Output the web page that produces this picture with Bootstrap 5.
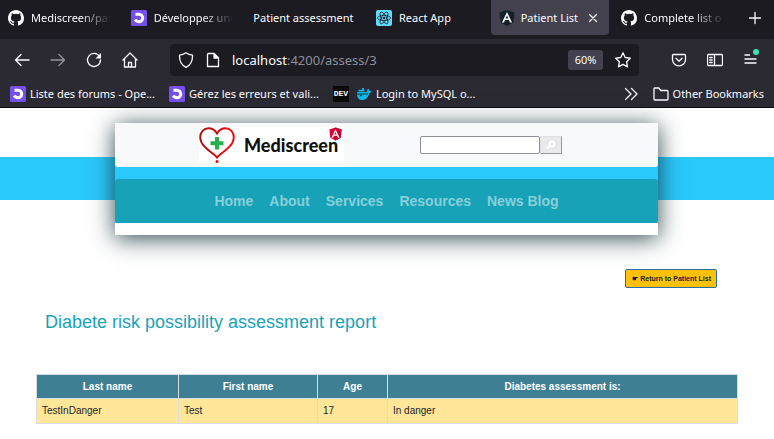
<!DOCTYPE html>
<html lang="en">
<head>
<meta charset="utf-8">
<meta name="viewport" content="width=device-width, initial-scale=1">
<title>Patient List</title>
<link rel="stylesheet" href="https://cdn.jsdelivr.net/npm/bootstrap@5.3.0/dist/css/bootstrap.min.css">
<style>
body { font-family: "Liberation Sans", Arial, sans-serif; font-size: 10px; line-height: 15px; color: #212529; background: #fff; }
svg { display: block; flex: none; }
.chrome { font-family: "Noto Sans", "Segoe UI", sans-serif; font-size: 11px; line-height: 16px; color: #fbfbfe; background: #2b2a33; border-bottom: 1px solid #0c0c0d; }
.chrome button, .chrome a { color: inherit; font: inherit; text-decoration: none; background: none; border: 0; padding: 0; }
.line-icon { fill: none; stroke: currentColor; stroke-width: 1.3; stroke-linecap: round; stroke-linejoin: round; }
.tabstrip { height: 39px; background: #1c1b22; }
.chrome .page-tab { flex: 1 1 0; min-width: 0; height: 35px; padding: 0 8px; gap: 7px; margin-right: 4px; border-radius: 0 0 4px 4px; }
.chrome .page-tab.current { background: #42414d; gap: 6px; }
.tab-label { flex: 1 1 0; min-width: 0; white-space: nowrap; text-align: left; }
.chrome button.tab-label { text-align: left; }
.tab-label.faded { -webkit-mask-image: linear-gradient(to right, #000 60%, transparent); mask-image: linear-gradient(to right, #000 60%, transparent); }
.new-tab { width: 38px; height: 35px; }
.toolbar-row { height: 41px; padding: 0 5px 0 4px; }
.tool { width: 36px; height: 32px; }
.urlbar { height: 32px; margin: 0 22px; padding: 0 8px; gap: 12px; background: #1c1b22; border-radius: 4px; }
.chrome .urlbar .address { font-size: 13px; color: #fbfbfe; }
.chrome .urlbar .address span { color: #8f8f9a; }
.chrome .zoom-level { width: 35px; height: 20px; background: #42414d; border-radius: 3px; }
.bookmarks { height: 27px; padding: 0 10px; gap: 14px; }
.bookmarks a { gap: 4px; white-space: nowrap; }
.bookmarks .marks-pair { gap: 7px; }
.chrome .dev-mark { width: 16px; height: 16px; background: #0a0a0a; font: bold 8px/16px "Liberation Mono", monospace; text-align: center; }

.banner { padding: 15px 116px 34px 115px; background: linear-gradient(#fff 49px, #29c9fc 49px, #29c9fc 92px, #fff 92px); }
.sheet { background: #fff; padding-bottom: 12px; box-shadow: 0 3px 22px rgba(24, 52, 60, .9); }
.masthead { height: 44px; background: #f8f9fb; border-radius: 0 0 3px 3px; padding: 0 96px 0 84px; }
.stripe { background: #29c9fc; padding-top: 12px; }
.brand { height: 36px; padding-right: 6px; background: #fff; color: #111; font: 900 18px/36px Lato, sans-serif; text-decoration: none; gap: 9px; }
.brand:hover { color: #111; }
.brand .shield { top: 0; right: 2px; }
.search input { width: 120px; height: 18px; border: 1px solid #8f8f9d; border-radius: 2px; padding: 0 2px; background: #fff; }
.search button { width: 22px; height: 18px; padding: 0; border: 1px solid #e0e0e4; border-right-color: #999; border-bottom-color: #999; background: #e9e9ed; }
.site-nav { height: 44px; gap: 16px; background: #18a2b8; border-radius: 3px; }
.site-nav a { font-size: 14px; line-height: 20px; font-weight: 900; color: #87cfd9; text-decoration: none; }
.btn-return { font-size: 7px; font-weight: 700; line-height: 15px; padding: 1px 5px 1px 6px; color: #212529; background: #ffc107; border: 1px solid #2a6ea5; border-radius: 2px; }
.return-row { padding-right: 57px; }
.report { padding: 22px 36px 0; }
.report h1 { font-size: 18px; line-height: 24px; font-weight: 400; color: #18a2b8; margin: 0 0 40px; padding-left: 9px; }
.report table { margin: 0; table-layout: fixed; border-color: #dee2e6; color: #212529; }
.report th, .report td { padding: 4px 5px; border: 1px solid #dadde0; }
.report th { background: #3f7f93; color: #fff; text-align: center; }
.report td { background: #ffe699; padding-bottom: 5px; }
.c-last { width: 142px; } .c-first { width: 139px; } .c-age { width: 70px; }
</style>
</head>
<body>
<svg width="0" height="0" class="position-absolute" aria-hidden="true">
  <defs>
    <symbol id="octo" viewBox="0 0 16 16"><path fill="#fff" d="M8 0C3.58 0 0 3.58 0 8c0 3.54 2.29 6.53 5.47 7.59.4.07.55-.17.55-.38 0-.19-.01-.82-.01-1.49-2.01.37-2.53-.49-2.69-.94-.09-.23-.48-.94-.82-1.13-.28-.15-.68-.52-.01-.53.63-.01 1.08.58 1.23.82.72 1.21 1.87.87 2.33.66.07-.52.28-.87.51-1.07-1.78-.2-3.64-.89-3.64-3.95 0-.87.31-1.59.82-2.15-.08-.2-.36-1.02.08-2.12 0 0 .67-.21 2.2.82a7.6 7.6 0 0 1 4 0c1.53-1.04 2.2-.82 2.2-.82.44 1.1.16 1.92.08 2.12.51.56.82 1.27.82 2.15 0 3.07-1.87 3.75-3.65 3.95.29.25.54.73.54 1.48 0 1.07-.01 1.93-.01 2.2 0 .21.15.46.55.38A8 8 0 0 0 16 8c0-4.42-3.58-8-8-8z"/></symbol>
    <symbol id="oc" viewBox="0 0 16 16"><rect width="16" height="16" rx="1.5" fill="#7451eb"/><path fill="none" stroke="#fff" stroke-width="3" d="M4.500 4.300H8a3.700 3.700 0 0 1 0 7.400C6 11.700 5 11 4 9.800"/></symbol>
  </defs>
</svg>
<header class="chrome">
  <div class="tabstrip d-flex">
    <button class="page-tab d-flex align-items-center"><svg width="16" height="16"><use href="#octo"/></svg><span class="tab-label faded">Mediscreen/pat</span></button>
    <button class="page-tab d-flex align-items-center"><svg width="16" height="16"><use href="#oc"/></svg><span class="tab-label faded">Développez une</span></button>
    <button class="page-tab d-flex align-items-center"><span class="tab-label">Patient assessment</span></button>
    <button class="page-tab d-flex align-items-center"><svg width="16" height="16" viewBox="0 0 16 16"><rect width="16" height="16" rx="2" fill="#61dafb"/><g fill="none" stroke="#20232a" stroke-width=".8"><ellipse cx="8" cy="8" rx="6.600" ry="2.600"/><ellipse cx="8" cy="8" rx="6.600" ry="2.600" transform="rotate(60 8 8)"/><ellipse cx="8" cy="8" rx="6.600" ry="2.600" transform="rotate(120 8 8)"/></g><circle cx="8" cy="8" r="1.300" fill="#20232a"/></svg><span class="tab-label">React App</span></button>
    <div class="page-tab current d-flex align-items-center"><svg width="16" height="16" viewBox="0 0 16 16"><path fill="#15202b" d="M8 0l7.500 2.600-1.100 10L8 16l-6.400-3.400L.5 2.600z"/><path fill="#fff" fill-rule="evenodd" d="M8 2L3 12.500h2l1-2.400h4l1 2.400h2zM8 5.500l1.400 3.100H6.600z"/></svg><button class="tab-label">Patient List</button><button aria-label="Close tab"><svg class="line-icon" width="16" height="16" viewBox="0 0 16 16"><path d="M4.500 4.500l7 7m0-7l-7 7"/></svg></button></div>
    <button class="page-tab d-flex align-items-center"><svg width="16" height="16"><use href="#octo"/></svg><span class="tab-label faded">Complete list o</span></button>
    <button class="new-tab d-flex align-items-center justify-content-center" aria-label="New tab"><svg class="line-icon" width="16" height="16" viewBox="0 0 16 16"><path d="M8 2.500v11M2.500 8h11"/></svg></button>
  </div>
  <div class="toolbar-row d-flex align-items-center">
    <button class="tool d-flex align-items-center justify-content-center" aria-label="Back"><svg class="line-icon" width="16" height="16" viewBox="0 0 16 16"><path d="M15 8H1.500M7 2.500L1.500 8 7 13.500"/></svg></button>
    <button class="tool d-flex align-items-center justify-content-center opacity-50" aria-label="Forward" disabled><svg class="line-icon" width="16" height="16" viewBox="0 0 16 16"><path d="M1 8h13.500M9 2.500L14.500 8 9 13.500"/></svg></button>
    <button class="tool d-flex align-items-center justify-content-center" aria-label="Reload"><svg class="line-icon" width="16" height="16" viewBox="0 0 16 16"><path d="M13.500 4.500A6.500 6.500 0 1 0 14.500 8"/><path fill="currentColor" stroke="none" d="M15 1v5.500H9.500z"/></svg></button>
    <button class="tool d-flex align-items-center justify-content-center" aria-label="Home"><svg class="line-icon" width="16" height="16" viewBox="0 0 16 16"><path d="M1 8l7-7 7 7M2.500 7v8h11V7M6.500 15v-4.500h3V15"/></svg></button>
    <div class="urlbar d-flex align-items-center flex-grow-1">
      <svg class="line-icon" width="16" height="16" viewBox="0 0 16 16"><path d="M8 .8c2 1.500 4 2.200 6.500 2.400C14.700 9 12.500 13 8 15.300 3.500 13 1.300 9 1.500 3.200 4 3 6 2.300 8 .8z"/></svg>
      <svg class="line-icon" width="14" height="16" viewBox="1 0 14 16"><path d="M3.500 1.500H9L13.500 6v8.500h-11v-12a1 1 0 0 1 1-1z"/><path fill="currentColor" d="M9 1.500V6h4.500z"/></svg>
      <a class="address flex-grow-1" href="#">localhost<span>:4200/assess/3</span></a>
      <button class="zoom-level">60%</button>
      <button aria-label="Bookmark this page"><svg class="line-icon" width="16" height="16" viewBox="0 0 16 16"><path d="M8 .8l2.200 4.700 5.100.7-3.700 3.500.9 5.200L8 12.400l-4.500 2.500.9-5.200L.7 6.200l5.100-.7z"/></svg></button>
    </div>
    <button class="tool d-flex align-items-center justify-content-center" aria-label="Save to Pocket"><svg class="line-icon" width="16" height="16" viewBox="0 0 16 16"><path d="M2.500 2.500h11a1 1 0 0 1 1 1V7.500a6.500 6.300 0 0 1-13 0v-4a1 1 0 0 1 1-1z"/><path d="M5 6.300l3 3 3-3"/></svg></button>
    <button class="tool d-flex align-items-center justify-content-center" aria-label="Sidebars"><svg class="line-icon" width="16" height="16" viewBox="0 0 16 16"><path d="M1.500 2.500h13a1 1 0 0 1 1 1v9a1 1 0 0 1-1 1h-13a1 1 0 0 1-1-1v-9a1 1 0 0 1 1-1zM7.500 2.500v11M2.700 5.500h2.500M2.700 8h2.500M2.700 10.500h2.500"/></svg></button>
    <button class="tool d-flex align-items-center justify-content-center" aria-label="Menu"><svg class="line-icon" width="18" height="24" viewBox="0 0 18 24"><path d="M3 7h4.500M3 11h11M3 15h11"/><circle cx="14" cy="4" r="3" fill="#3fe1b0" stroke="none"/></svg></button>
  </div>
  <nav class="bookmarks d-flex align-items-center" aria-label="Bookmarks">
    <a class="d-flex align-items-center" href="#"><svg width="16" height="16"><use href="#oc"/></svg>Liste des forums - Ope...</a>
    <a class="d-flex align-items-center" href="#"><svg width="16" height="16"><use href="#oc"/></svg>Gérez les erreurs et vali...</a>
    <div class="marks-pair d-flex align-items-center me-auto">
      <a class="dev-mark" href="#">DEV</a>
      <a class="d-flex align-items-center" href="#"><svg width="16" height="16" viewBox="0 0 16 16"><path fill="#0db7ed" d="M1 6h10c0-1.500.3-2.500 1-3.500.9.600 1.200 1.400 1.200 2.300 1 0 1.700.2 2.300.7-.5 1-1.300 1.400-2.300 1.400C12.600 11 10 14 6 14c-3.500 0-5.300-2.500-5-8z"/><path fill="#0db7ed" d="M2.500 3.700h6v1.800h-6zM6 2h2v1.500H6z"/><circle cx="5" cy="9.500" r="1" fill="#083a4c"/><path stroke="#083a4c" fill="none" d="M1 8h11"/></svg>Login to MySQL o...</a>
    </div>
    <button aria-label="More bookmarks"><svg class="line-icon" width="16" height="16" viewBox="0 0 16 16"><path d="M2.500 2.500L8 8l-5.500 5.500M8.500 2.500L14 8l-5.500 5.500"/></svg></button>
    <a class="d-flex align-items-center" href="#"><svg class="line-icon" width="16" height="16" viewBox="0 0 16 16"><path d="M1.500 2h4.300l2 2.500h6.200a1 1 0 0 1 1 1V13a1 1 0 0 1-1 1h-12a1 1 0 0 1-1-1V2.500z"/></svg>Other Bookmarks</a>
  </nav>
</header>

<main>
  <div class="banner">
    <div class="sheet">
      <div class="stripe pt-0">
        <div class="masthead d-flex align-items-center justify-content-between">
          <a class="brand d-flex align-items-center position-relative" href="#">
            <svg width="36" height="36" viewBox="0 0 36 36"><defs><linearGradient id="heart"><stop offset=".2" stop-color="#b00d0d"/><stop offset=".8" stop-color="#f40808"/></linearGradient></defs><path fill="none" stroke="url(#heart)" stroke-width="1.900" stroke-linecap="round" d="M18 30.500C15 26 1.500 20.500 1.200 10.500 1 5 5 1.200 9.500 1.200c4.300 0 7 2.500 8.500 5.300 1.500-2.800 4.200-5.300 8.500-5.300C31 1.200 35 5 34.800 10.500 34.500 20.500 21 26 18 30.500z"/><circle cx="18" cy="34.500" r="1.500" fill="#f00"/><path fill="#27ae4f" d="M16 10h4v4.200h4.500v4H20v4.300h-4v-4.300h-4.500v-4H16z"/></svg>
            <span>Mediscreen</span>
            <svg class="shield position-absolute" width="13" height="14" viewBox="0 0 16 16"><path fill="#dd0031" d="M8 0l7.500 2.600-1.100 10L8 16l-6.400-3.400L.5 2.600z"/><path fill="#c3002f" d="M8 0l7.500 2.600-1.100 10L8 16z"/><path fill="#fff" fill-rule="evenodd" d="M8 2L3 12.500h2l1-2.400h4l1 2.400h2zM8 5.500l1.400 3.100H6.600z"/></svg>
          </a>
          <form class="search d-flex">
            <input type="text" aria-label="Search">
            <button type="button" class="d-flex align-items-center justify-content-center" aria-label="Search"><svg width="12" height="10" viewBox="0 0 12 10"><circle cx="7" cy="4" r="2.500" fill="none" stroke="#fff" stroke-width="1.700"/><path stroke="#fff" stroke-width="2" d="M5.200 5.500L1.500 8.500"/></svg></button>
          </form>
        </div>
      </div>
      <div class="stripe">
        <nav class="site-nav d-flex align-items-center justify-content-center" aria-label="Main">
          <a href="#">Home</a><a href="#">About</a><a href="#">Services</a><a href="#">Resources</a><a href="#">News Blog</a>
        </nav>
      </div>
    </div>
  </div>
  <div class="return-row d-flex justify-content-end">
    <button class="btn btn-return">☛ Return to Patient List</button>
  </div>
  <section class="report">
    <h1>Diabete risk possibility assessment report</h1>
    <table class="table table-bordered">
      <colgroup><col class="c-last"><col class="c-first"><col class="c-age"><col></colgroup>
      <thead><tr><th>Last name</th><th>First name</th><th>Age</th><th>Diabetes assessment is:</th></tr></thead>
      <tbody><tr><td>TestInDanger</td><td>Test</td><td>17</td><td>In danger</td></tr></tbody>
    </table>
  </section>
</main>
<script src="https://cdn.jsdelivr.net/npm/bootstrap@5.3.0/dist/js/bootstrap.bundle.min.js"></script>
</body>
</html>
